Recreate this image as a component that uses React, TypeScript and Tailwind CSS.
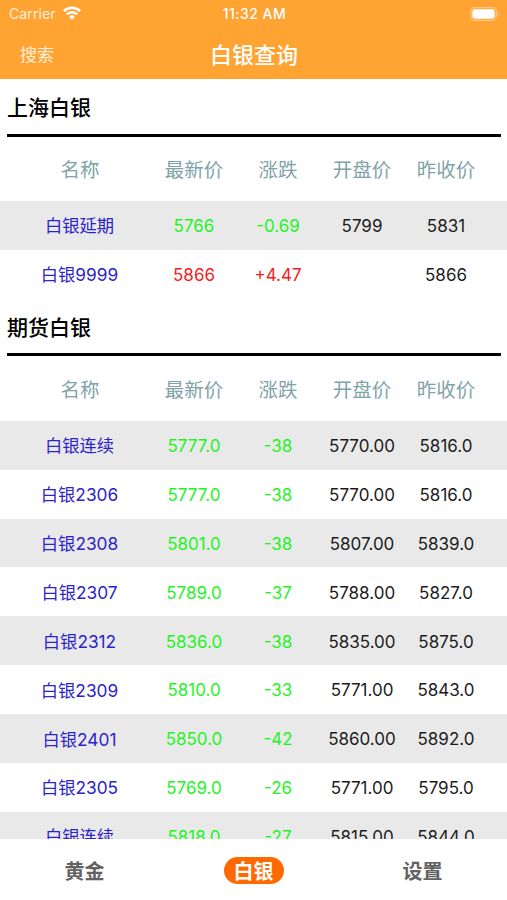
import { useState } from "react"

const sections = [
    {
        title: "上海白银",
        rows: [
            ["白银延期", "5766", "-0.69", "5799", "5831"],
            ["白银9999", "5866", "+4.47", "", "5866"],
        ],
    },
    {
        title: "期货白银",
        rows: [
            ["白银连续", "5777.0", "-38", "5770.00", "5816.0"],
            ["白银2306", "5777.0", "-38", "5770.00", "5816.0"],
            ["白银2308", "5801.0", "-38", "5807.00", "5839.0"],
            ["白银2307", "5789.0", "-37", "5788.00", "5827.0"],
            ["白银2312", "5836.0", "-38", "5835.00", "5875.0"],
            ["白银2309", "5810.0", "-33", "5771.00", "5843.0"],
            ["白银2401", "5850.0", "-42", "5860.00", "5892.0"],
            ["白银2305", "5769.0", "-26", "5771.00", "5795.0"],
            ["白银连续", "5818.0", "-27", "5815.00", "5844.0"],
        ],
    },
]

const columns = ["名称", "最新价", "涨跌", "开盘价", "昨收价"]
const tabs = ["黄金", "白银", "设置"]
const grid = "grid grid-cols-[144px_84px_84px_84px_84px] items-center pl-2 text-center whitespace-nowrap"

function StatusBar() {
    return (
        <div className="grid h-[27px] grid-cols-3 items-center pl-[9px] pr-[7px] text-[14px]">
            <div className="flex items-center gap-[7px]">
                <span className="text-[14.2px] text-[#fff0dc]">Carrier</span>
                <svg width="18" height="14" viewBox="0 0 18 14" fill="none" stroke="white" strokeWidth="2.7">
                    <path d="M0.9 5.1a11.5 11.5 0 0 1 16.2 0" />
                    <path d="M3.8 8.4a7.4 7.4 0 0 1 10.4 0" />
                    <path d="M9 13.8 6.1 10.8a4.1 4.1 0 0 1 5.8 0z" fill="white" stroke="none" />
                </svg>
            </div>
            <span className="text-center text-[14px] font-medium tracking-[0.45px]">11:32 AM</span>
            <svg className="justify-self-end" width="30" height="14" viewBox="0 0 30 14">
                <rect x="0.7" y="0.7" width="25.6" height="12.6" rx="4" fill="none" stroke="white" strokeOpacity="0.4" strokeWidth="1.3" />
                <rect x="2.3" y="2.3" width="22.4" height="9.4" rx="2.4" fill="white" />
                <path d="M27.6 5v4c1-.4 1.6-1.1 1.6-2s-.6-1.6-1.6-2z" fill="white" fillOpacity="0.4" />
            </svg>
        </div>
    )
}

function Section({ title, rows }: { title: string; rows: string[][] }) {
    return (
        <section>
            <div className="ml-[7px] mr-[6px] flex h-[57.5px] items-center border-b-3 border-black pt-[2px] text-[21px] font-medium text-black">
                <h2 className="leading-none">{title}</h2>
            </div>
            <div className={`${grid} h-[64.5px] pt-[4px] text-[19.5px] text-[#7fa3a8]`}>
                {columns.map((c) => <span key={c}>{c}</span>)}
            </div>
            {rows.map((row, i) => {
                const color = row[2].startsWith("+") ? "text-[#f42020]" : "text-[#1ff41f]"
                return (
                    <div key={i} className={`${grid} h-[48.9px] pt-[3px] text-[17px] text-[#1c1c1c] ${i % 2 === 0 ? "bg-[#e9e9e9]" : "bg-white"}`}>
                        <span className="pb-px pr-px text-[17.3px] text-[#2c24c8]">{row[0]}</span>
                        <span className={color}>{row[1]}</span>
                        <span className={color}>{row[2]}</span>
                        <span>{row[3]}</span>
                        <span>{row[4]}</span>
                    </div>
                )
            })}
        </section>
    )
}

export default function App() {
    const [tab, setTab] = useState("白银")

    return (
        <div className="flex h-[900px] w-[507px] flex-col overflow-hidden bg-white font-['Inter','Noto_Sans_CJK_SC',sans-serif]">
            <header className="h-[79px] shrink-0 bg-[#ffa333] text-white">
                <StatusBar />
                <div className="grid h-[55px] grid-cols-3 items-center">
                    <button className="pl-5 pt-[2px] text-left text-[17px] text-[#fff0dc]">搜索</button>
                    <h1 className="pl-px pt-[2px] text-center text-[22px] font-medium">白银查询</h1>
                </div>
            </header>
            <main className="flex min-h-0 flex-1 flex-col overflow-hidden">
                <div className="flex shrink-0 flex-col">
                    {sections.map((s) => <Section key={s.title} title={s.title} rows={s.rows} />)}
                </div>
            </main>
            <nav className="grid h-[61px] shrink-0 grid-cols-3 items-center justify-items-center bg-white text-[20px] font-bold">
                {tabs.map((t) => (
                    <button
                        key={t}
                        onClick={() => setTab(t)}
                        className={`mt-[2px] flex h-[27px] w-[60px] items-center justify-center rounded-full pt-[3px] leading-none ${tab === t ? "bg-[#ff6a00] text-white" : "text-[#626262]"}`}
                    >
                        {t}
                    </button>
                ))}
            </nav>
        </div>
    )
}
